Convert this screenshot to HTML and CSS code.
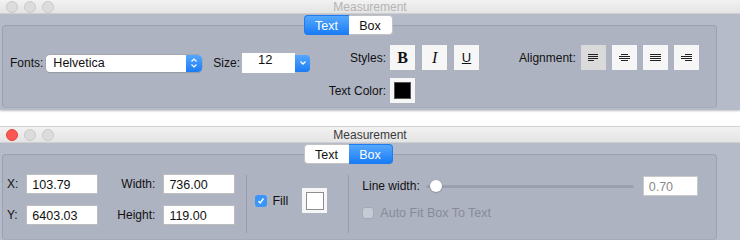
FILE: index.html
```html
<!DOCTYPE html>
<html lang="en">
  <head>
    <meta charset="UTF-8" />
    <meta name="viewport" content="width=device-width, initial-scale=1.0" />
    <title>Measurement</title>
    <link rel="stylesheet" href="styles.css">
  </head>
  <body>
    <!-- inactive window: text settings -->
    <div class="win inactive">
      <div class="titlebar">
        <div class="lights">
          <span class="light"></span><span class="light"></span><span class="light"></span>
        </div>
        <div class="title">Measurement</div>
        <div></div>
      </div>
      <div class="content">
        <div class="tabs">
          <span class="seg on">Text</span><span class="seg">Box</span>
        </div>
        <div class="group text-group">
          <div class="fonts">
            <span class="lbl">Fonts:</span>
            <div class="popup">
              <span class="popup-text">Helvetica</span>
              <span class="cap">
                <svg width="8" height="12" viewBox="0 0 8 12"><path d="M1.5 4.5 L4 2 L6.5 4.5 M1.5 7.5 L4 10 L6.5 7.5" fill="none" stroke="#fff" stroke-width="1.2"/></svg>
              </span>
            </div>
            <span class="lbl size-lbl">Size:</span>
            <div class="combo">
              <span class="combo-field">12</span>
              <span class="combo-btn">
                <svg width="8" height="6" viewBox="0 0 8 6"><path d="M1.5 1.5 L4 4 L6.5 1.5" fill="none" stroke="#fff" stroke-width="1.3"/></svg>
              </span>
            </div>
          </div>
          <div class="styles">
            <span class="lbl">Styles:</span>
            <div class="btn-row">
              <span class="sq bold">B</span>
              <span class="sq ital">I</span>
              <span class="sq under">U</span>
            </div>
            <span class="lbl">Text Color:</span>
            <div class="well"><span class="swatch dark"></span></div>
          </div>
          <div class="align">
            <span class="lbl">Alignment:</span>
            <span class="sq sel">
              <svg width="11" height="8" viewBox="0 0 11 8"><path d="M0 0.5h10M0 2.5h10M0 4.5h10M0 6.5h6" stroke="#222" stroke-width="1"/></svg>
            </span>
            <span class="sq">
              <svg width="11" height="8" viewBox="0 0 11 8"><path d="M2 0.5h7M0 2.5h11M0 4.5h11M2 6.5h7" stroke="#222" stroke-width="1"/></svg>
            </span>
            <span class="sq">
              <svg width="11" height="8" viewBox="0 0 11 8"><path d="M0 0.5h11M0 2.5h11M0 4.5h11M0 6.5h11" stroke="#222" stroke-width="1"/></svg>
            </span>
            <span class="sq">
              <svg width="11" height="8" viewBox="0 0 11 8"><path d="M4 0.5h7M0 2.5h11M0 4.5h11M4 6.5h7" stroke="#222" stroke-width="1"/></svg>
            </span>
          </div>
        </div>
      </div>
    </div>

    <!-- active window: box settings -->
    <div class="win active">
      <div class="titlebar">
        <div class="lights">
          <span class="light red"></span><span class="light"></span><span class="light"></span>
        </div>
        <div class="title">Measurement</div>
        <div></div>
      </div>
      <div class="content">
        <div class="tabs">
          <span class="seg">Text</span><span class="seg on">Box</span>
        </div>
        <div class="group box-group">
          <div class="coords">
            <span class="lbl">X:</span>
            <span class="field">103.79</span>
            <span class="lbl wide">Width:</span>
            <span class="field">736.00</span>
            <span class="lbl">Y:</span>
            <span class="field">6403.03</span>
            <span class="lbl wide">Height:</span>
            <span class="field">119.00</span>
          </div>
          <div class="sep"></div>
          <div class="fill">
            <span class="check on">
              <svg width="8" height="8" viewBox="0 0 8 8"><path d="M1.5 4.2 L3.2 6 L6.5 1.5" fill="none" stroke="#fff" stroke-width="1.4"/></svg>
            </span>
            <span class="fill-lbl">Fill</span>
            <div class="well"><span class="swatch light-sw"></span></div>
          </div>
          <div class="sep second"></div>
          <div class="line">
            <div class="line-row">
              <span class="lbl">Line width:</span>
              <div class="track"><span class="knob"></span></div>
              <span class="field dim">0.70</span>
            </div>
            <div class="auto-row">
              <span class="check off"></span>
              <span class="auto-lbl">Auto Fit Box To Text</span>
            </div>
          </div>
        </div>
      </div>
    </div>
  </body>
</html>
```

FILE: styles.css
```css
body {
  margin: 0;
  padding: 0;
  width: 740px;
  height: 240px;
  overflow: hidden;
  background-color: #fff;
  font-family: "Liberation Sans", Arial, sans-serif;
  font-size: 12px;
  color: #111;
}

.win {
  background-color: #b6bbc9;
  box-shadow: 0 1px 2px rgba(0, 0, 0, 0.25);
}

.inactive {
  height: 110px;
}

.active {
  margin-top: 16px;
  height: 114px;
  border-top: 1px solid #d4d4d4;
}

/* title bar */
.titlebar {
  display: grid;
  grid-template-columns: 1fr auto 1fr;
  align-items: center;
  height: 14px;
  background: linear-gradient(#f2f2f2, #e4e4e4);
  border-bottom: 1px solid #cfcfcf;
  box-sizing: border-box;
}

.active .titlebar {
  height: 16px;
}

.lights {
  display: flex;
  gap: 6px;
  padding-left: 6px;
}

.light {
  width: 12px;
  height: 12px;
  border-radius: 50%;
  background-color: #dcdcdc;
  box-sizing: border-box;
  border: 1px solid #cacaca;
}

.light.red {
  background-color: #fc5753;
  border-color: #e1463f;
}

.title {
  font-size: 12px;
  color: #b4b4b4;
}

.active .title {
  color: #3a3a3a;
}

/* content */
.content {
  padding-top: 1px;
}

.tabs {
  display: flex;
  justify-content: center;
  height: 20px;
  margin-bottom: -10px;
  margin-right: 44px;
  position: relative;
  z-index: 1;
}

.seg {
  width: 45px;
  height: 20px;
  line-height: 20px;
  text-align: center;
  background-color: #fff;
  color: #111;
  font-size: 12.5px;
  box-sizing: border-box;
  border: 1px solid #c3c3c3;
}

.seg:first-child {
  border-radius: 4px 0 0 4px;
  border-right: none;
}

.seg:last-child {
  width: 44px;
  border-radius: 0 4px 4px 0;
  border-left: none;
}

.seg.on {
  background: linear-gradient(#56a8fd, #1a7df6);
  color: #fff;
  border-color: #1d7cf2;
}

.group {
  display: flex;
  align-items: flex-start;
  margin: 0 23px 0 2px;
  background-color: #aeb3c2;
  border: 1px solid #9ca1b1;
  border-bottom-color: #a6abba;
  border-radius: 4px;
  box-sizing: border-box;
}

.text-group {
  height: 83px;
  padding-left: 7px;
}

.box-group {
  height: 86px;
  padding-left: 4px;
}

.lbl {
  white-space: nowrap;
}

/* fonts row */
.fonts {
  display: flex;
  align-items: center;
  height: 20px;
  margin-top: 27px;
}

.popup {
  display: flex;
  margin-left: 3px;
  width: 156px;
  height: 17px;
  background-color: #fff;
  border-radius: 4px;
  box-shadow: 0 0 0 0.5px #9a9a9a, 0 1px 1px rgba(0, 0, 0, 0.15);
}

.popup-text {
  flex: 1;
  padding-left: 7px;
  line-height: 17px;
  font-size: 12.5px;
}

.cap {
  display: flex;
  align-items: center;
  justify-content: center;
  width: 16px;
  background: linear-gradient(#55a7fd, #1a7cf5);
  border-radius: 0 4px 4px 0;
}

.size-lbl {
  margin-left: 11px;
}

.combo {
  display: flex;
  align-items: center;
  margin-left: 2px;
}

.combo-field {
  width: 53px;
  height: 20px;
  padding-left: 16px;
  box-sizing: border-box;
  background-color: #fff;
  font-size: 13px;
  line-height: 14px;
}

.combo-btn {
  display: flex;
  align-items: center;
  justify-content: center;
  width: 15px;
  height: 17px;
  background: linear-gradient(#55a7fd, #1a7cf5);
  border-radius: 0 4px 4px 0;
}

/* styles block */
.styles {
  display: grid;
  grid-template-columns: 58px auto;
  column-gap: 4px;
  row-gap: 8px;
  align-items: center;
  margin-left: 18px;
  margin-top: 19px;
}

.styles .lbl {
  text-align: right;
}

.btn-row {
  display: flex;
  gap: 7px;
}

.sq {
  display: flex;
  align-items: center;
  justify-content: center;
  width: 25px;
  height: 25px;
  background-color: #f6f6f6;
}

.sq.sel {
  background-color: #dadada;
}

.bold {
  font-family: "Liberation Serif", serif;
  font-weight: bold;
  font-size: 16px;
}

.ital {
  font-family: "Liberation Serif", serif;
  font-style: italic;
  font-size: 16px;
}

.under {
  text-decoration: underline;
  font-size: 13px;
}

.well {
  display: flex;
  align-items: center;
  justify-content: center;
  width: 25px;
  height: 25px;
  background-color: #f6f6f6;
}

.swatch {
  width: 17px;
  height: 17px;
  box-sizing: border-box;
}

.swatch.dark {
  background-color: #000;
  border: 1px solid #555;
}

.swatch.light-sw {
  width: 18px;
  height: 18px;
  background-color: #fff;
  border: 1px solid #8d8d8d;
}

/* alignment */
.align {
  display: flex;
  align-items: center;
  gap: 6px;
  margin-left: 40px;
  margin-top: 19px;
}

.align .lbl {
  margin-right: -1px;
}

/* box group */
.coords {
  display: grid;
  grid-template-columns: auto 72px auto 72px;
  column-gap: 8px;
  row-gap: 11px;
  align-items: center;
  margin-top: 19px;
}

.coords .wide {
  margin-left: 11px;
  text-align: right;
}

.field {
  height: 20px;
  line-height: 20px;
  padding-left: 5px;
  box-sizing: border-box;
  background-color: #fff;
  border: 1px solid #bdbdbd;
  font-size: 12.5px;
}

.sep {
  width: 1px;
  height: 58px;
  margin: 20px 0 0 11px;
  background-color: #979cac;
}

.sep.second {
  margin-left: 21px;
}

.fill {
  display: flex;
  align-items: center;
  margin-left: 8px;
  margin-top: 33px;
}

.check {
  display: flex;
  align-items: center;
  justify-content: center;
  width: 12px;
  height: 12px;
  box-sizing: border-box;
  border-radius: 3px;
}

.check.on {
  background-color: #3a96fb;
}

.check.off {
  background-color: #c6cad5;
  border: 1px solid #a3a8b6;
}

.fill-lbl {
  margin-left: 5px;
  margin-right: 14px;
  font-size: 12.5px;
}

.line {
  margin-left: 13px;
  margin-top: 21px;
}

.line-row {
  display: flex;
  align-items: center;
}

.track {
  display: flex;
  align-items: center;
  width: 208px;
  height: 3px;
  margin-left: 6px;
  background-color: #9ba0af;
  border-radius: 2px;
}

.knob {
  width: 12px;
  height: 12px;
  margin-left: 4px;
  border-radius: 50%;
  background-color: #fff;
  box-shadow: 0 0.5px 1.5px rgba(0, 0, 0, 0.35);
}

.field.dim {
  width: 55px;
  margin-left: 9px;
  color: #8a8a8a;
  border-color: #c9c9c9;
}

.auto-row {
  display: flex;
  align-items: center;
  margin-top: 10px;
}

.auto-lbl {
  margin-left: 6px;
  color: #878b99;
  font-size: 12.5px;
}
```
